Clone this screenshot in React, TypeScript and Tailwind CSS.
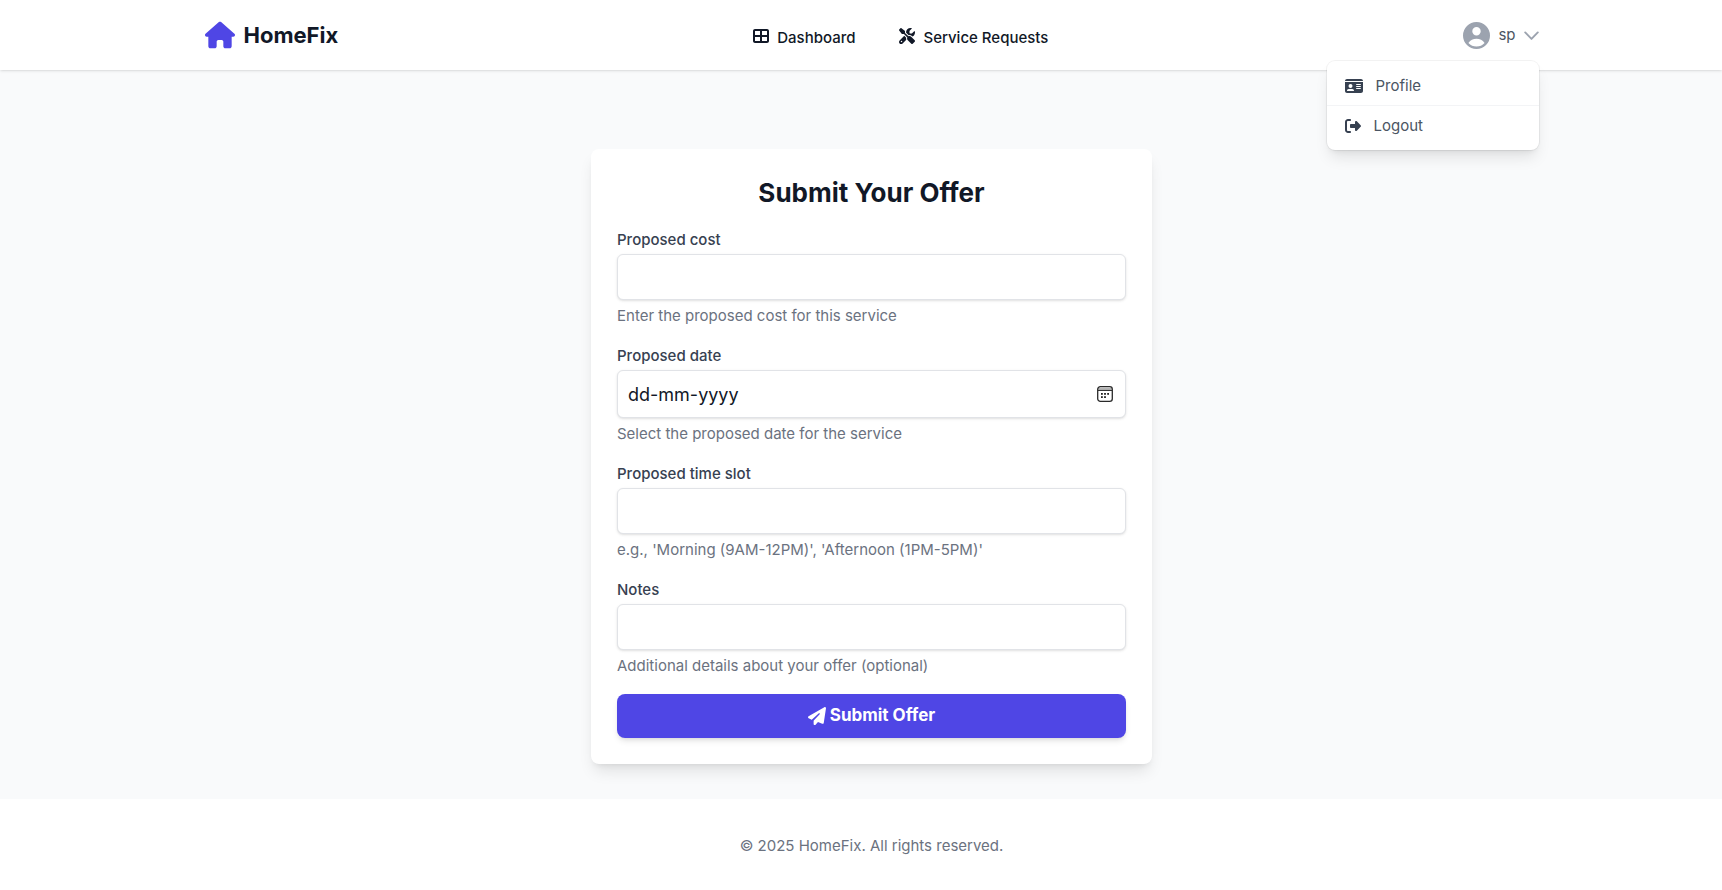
import React from "react";
import {
  FaHouse,
  FaTableCellsLarge,
  FaScrewdriverWrench,
  FaIdCard,
  FaRightFromBracket,
  FaPaperPlane,
} from "react-icons/fa6";

function UserCircle() {
  return (
    <svg viewBox="2 2 16 16" fill="currentColor" className="size-[27px] text-[#9ca3af]" aria-hidden="true">
      <path
        fillRule="evenodd"
        clipRule="evenodd"
        d="M18 10a8 8 0 1 1-16 0 8 8 0 0 1 16 0Zm-5.5-2.5a2.5 2.5 0 1 1-5 0 2.5 2.5 0 0 1 5 0ZM10 12a5.99 5.99 0 0 0-4.793 2.39A6.483 6.483 0 0 0 10 16.5a6.483 6.483 0 0 0 4.793-2.11A5.99 5.99 0 0 0 10 12Z"
      />
    </svg>
  );
}

function ChevronDown() {
  return (
    <svg
      viewBox="0 0 15 15"
      fill="none"
      stroke="currentColor"
      strokeWidth="1.9"
      strokeLinecap="round"
      strokeLinejoin="round"
      className="size-[15px] text-[#9ca3af]"
      aria-hidden="true"
    >
      <path d="M1.2 4.4L7.5 10.9L13.8 4.4" />
    </svg>
  );
}

function CalendarIcon() {
  return (
    <svg viewBox="0 0 16 16" className="size-4" fill="none" aria-hidden="true">
      <path d="M1.4 2.8h13.2" stroke="#b5b5b5" strokeWidth="2" />
      <rect x="0.7" y="0.7" width="14.6" height="14.6" rx="2.6" stroke="#2a2a2a" strokeWidth="1.3" />
      <path d="M1 4.4h14" stroke="#2a2a2a" strokeWidth="1.1" />
      <g fill="#222">
        <rect x="4" y="7" width="1.8" height="1.8" />
        <rect x="7.1" y="7" width="1.8" height="1.8" />
        <rect x="10.2" y="7" width="1.8" height="1.8" />
        <rect x="4" y="10.2" width="1.8" height="1.8" />
        <rect x="7.1" y="10.2" width="1.8" height="1.8" />
      </g>
    </svg>
  );
}

const inputClass =
  "block w-full rounded-md border border-[#e1e3e7] bg-white px-2.5 text-lg text-[#111827] shadow-sm outline-none placeholder:text-[#111827] focus:border-[#4f46e5]";

type FieldProps = { id: string; label: string; help: string; date?: boolean };

function Field({ id, label, help, date }: FieldProps) {
  return (
    <div className="flex flex-col">
      <label htmlFor={id} className="pb-0.5 text-[15px] leading-6 font-medium text-[#374151]">
        {label}
      </label>
      {date ? (
        <div className="relative">
          <input id={id} name={id} type="text" placeholder="dd-mm-yyyy" className={`${inputClass} h-12`} />
          <button type="button" aria-label="Choose date" className="absolute inset-y-0 right-[13px] flex items-center">
            <CalendarIcon />
          </button>
        </div>
      ) : (
        <input id={id} name={id} type="text" className={`${inputClass} h-[46px]`} />
      )}
      <p className="pt-1 text-[15px] leading-6 text-[#6b7280]">{help}</p>
    </div>
  );
}

const fields: FieldProps[] = [
  { id: "cost", label: "Proposed cost", help: "Enter the proposed cost for this service" },
  { id: "date", label: "Proposed date", help: "Select the proposed date for the service", date: true },
  { id: "slot", label: "Proposed time slot", help: "e.g., 'Morning (9AM-12PM)', 'Afternoon (1PM-5PM)'" },
  { id: "notes", label: "Notes", help: "Additional details about your offer (optional)" },
];

export default function App() {
  return (
    <div className="flex min-h-screen flex-col bg-[#f9fafb] font-['Inter',sans-serif] text-[#111827]">
      <header className="relative bg-white pl-[21px] shadow-sm">
        <div className="mx-auto flex h-[70px] max-w-[1334px] items-center justify-between">
          <a href="#" className="flex items-center gap-[9px]">
            <FaHouse className="size-[30px] text-[#4f46e5]" />
            <span className="text-[22px] leading-8 font-bold">HomeFix</span>
          </a>
          <nav className="flex items-center gap-11 pt-0.5 text-[15px] leading-6 font-medium">
            <a href="#" className="flex items-center gap-2">
              <FaTableCellsLarge className="size-4" />
              <span className="pt-1">Dashboard</span>
            </a>
            <a href="#" className="flex items-center gap-2">
              <FaScrewdriverWrench className="size-4" />
              <span className="pt-1">Service Requests</span>
            </a>
          </nav>
          <div className="relative">
            <button type="button" className="flex items-center gap-2 text-[15px] leading-[22px] text-[#4b5563]">
              <UserCircle />
              sp
              <ChevronDown />
            </button>
            <div className="absolute top-full right-0 z-10 mt-3 w-[212px] rounded-lg bg-white pb-1 text-[15px] leading-[22px] text-[#4b5563] shadow-lg ring-1 ring-black/5">
              <a href="#" className="flex items-center gap-[13px] border-b border-[#f3f4f6] px-[18px] pt-[14px] pb-2">
                <FaIdCard className="size-[18px] text-[#374151]" />
                Profile
              </a>
              <a href="#" className="flex items-center gap-[13px] px-[18px] py-[9px]">
                <FaRightFromBracket className="size-4 text-[#374151]" />
                Logout
              </a>
            </div>
          </div>
        </div>
      </header>

      <main className="flex-1 pt-[79px] pb-[35px] pl-[21px]">
        <form className="mx-auto flex max-w-[561px] flex-col gap-4 rounded-lg bg-white p-[26px] shadow-lg">
          <h1 className="pb-0.5 text-center text-[26px] leading-[35px] font-bold">Submit Your Offer</h1>
          {fields.map((f) => (
            <Field key={f.id} {...f} />
          ))}
          <button
            type="button"
            className="flex h-11 w-full items-center justify-center gap-1 rounded-lg bg-[#4f46e5] text-[17px] font-bold text-white shadow-md"
          >
            <FaPaperPlane className="size-[18px]" />
            Submit Offer
          </button>
        </form>
      </main>

      <footer className="bg-white py-[35px] pl-[21px] text-center text-[15px] leading-6 text-[#6b7280]">
        © 2025 HomeFix. All rights reserved.
      </footer>
    </div>
  );
}
